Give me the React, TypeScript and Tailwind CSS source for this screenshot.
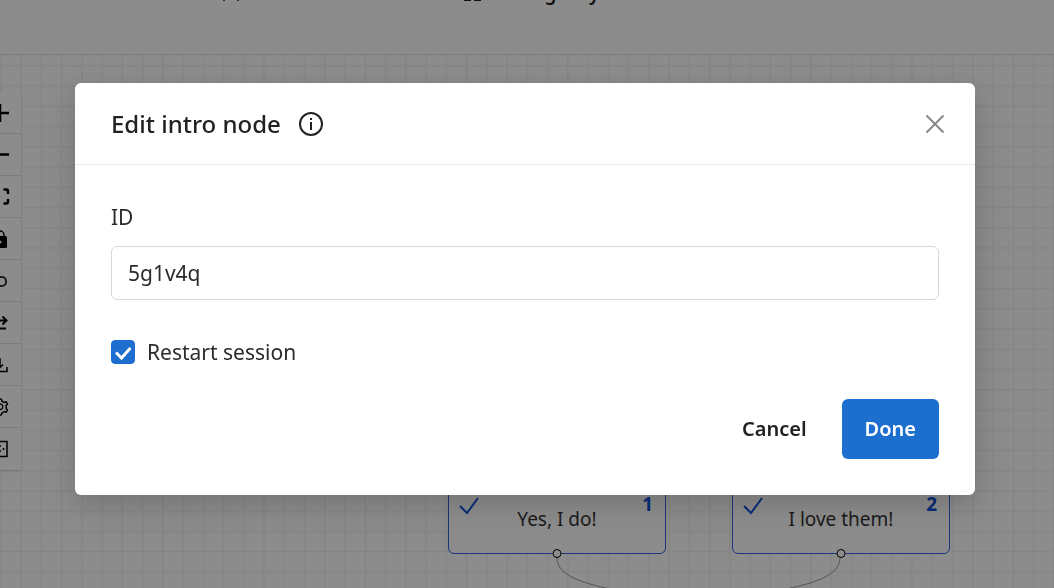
import { useState } from "react";
import { AiOutlineSetting } from "react-icons/ai";

const TOOLS = [
  { label: "Zoom in", icon: <path d="M12 3v18M3 12h18" strokeWidth="2.5" /> },
  { label: "Zoom out", icon: <path d="M3 11.500h18" strokeWidth="2.5" /> },
  {
    label: "Fit view",
    icon: <path d="M15.500 4.500H18q2 0 2 2V9M20 14v2.500q0 2-2 2h-2.500M8.500 4.500H6q-2 0-2 2V9M4 14v2.500q0 2 2 2h2.500" strokeWidth="2.5" />,
  },
  {
    label: "Lock",
    icon: (
      <>
        <rect x="5" y="9" width="14" height="12" rx="1.500" fill="currentColor" stroke="none" />
        <path d="M8 9.500V8a4 4 0 0 1 8 0v1.500" strokeWidth="1.500" />
        <circle cx="12" cy="15" r="1.500" fill="white" stroke="none" />
      </>
    ),
  },
  { label: "Undo", icon: <path d="M4 8h10a4 4 0 0 1 4 4v1a4 4 0 0 1-4 4H6" strokeWidth="2" className="text-[#333]" /> },
  { label: "Swap", icon: <path d="M4 9.500h14M14.500 5.500l4 4-4 4M4 17.500h14" strokeWidth="2" /> },
  { label: "Download", icon: <path d="M12 5v9M9 11.500l3 3 3-3M5 14v4.500h14V14" strokeWidth="1.500" /> },
  { label: "Settings", icon: <AiOutlineSetting x="2" y="2" size={20} stroke="currentColor" /> },
  { label: "Log", icon: <path d="M5 4.500h14v15H5zM12 8v2M12 13v2M15.500 11v2" strokeWidth="1.500" /> },
];

const ANSWERS = [
  { number: 1, text: "Yes, I do!" },
  { number: 2, text: "I love them!" },
];

function Grid() {
  return (
    <svg className="absolute inset-0 h-full w-full" aria-hidden="true">
      <defs>
        <pattern id="grid" y="10" width="20.25" height="20.25" patternUnits="userSpaceOnUse">
          <path d="M0.500 0V20.25M0 0.500H20.25" stroke="#f3f3f3" strokeWidth="2" />
        </pattern>
      </defs>
      <rect width="100%" height="100%" fill="url(#grid)" />
    </svg>
  );
}

function AnswerNode({ number, text }: { number: number; text: string }) {
  return (
    <div className="relative h-32 w-[218px] rounded-md border border-[#2f62e0] bg-white text-[19px] text-[#333]">
      <svg className="absolute bottom-9 left-2.5 size-6" viewBox="0 0 24 24" fill="none" stroke="#0b4fd8" strokeWidth="2" aria-hidden="true">
        <path d="m1 13 7 7L19 5" />
      </svg>
      <span className="absolute right-3 bottom-[35px] font-bold text-[#0b4fd8]">{number}</span>
      <p className="absolute inset-x-0 bottom-5 text-center">{text}</p>
      <span className="absolute -bottom-[5px] left-1/2 size-[9px] -translate-x-1/2 rounded-full border border-black bg-white" />
    </div>
  );
}

export default function App() {
  const [id, setId] = useState("5g1v4q");
  const [restart, setRestart] = useState(true);

  return (
    <div className="relative flex h-screen flex-col overflow-hidden bg-white font-['Noto_Sans','Open_Sans',sans-serif] text-[#222]">
      {/* Page header */}
      <header className="relative h-[55px] shrink-0 border-b border-[#e4e4e4]">
        <button aria-label="Users" className="absolute -top-[17px] left-[222px]">
          <svg className="size-[18px]" viewBox="0 0 18 18" fill="none" stroke="#555" strokeWidth="2" aria-hidden="true">
            <path d="M2 18v-5a7 7 0 0 1 14 0v5" />
            <circle cx="9" cy="4" r="3" />
          </svg>
        </button>
        <button className="absolute -top-[21px] left-[464px] flex items-center gap-[15px] text-[19px] leading-7 font-semibold">
          <svg className="size-[18px]" viewBox="0 0 18 18" fill="currentColor" aria-hidden="true">
            <path d="M0 0h7v7H0zM10 0h7v7h-7zM0 10h7v7H0zM10 10h7v7h-7z" />
          </svg>
          Change layout
        </button>
      </header>

      {/* Flow canvas */}
      <main className="relative grow">
        <Grid />
        <div className="absolute top-[37px] -left-[21px] w-[42px] divide-y divide-[#e4e4e4] bg-white shadow">
          {TOOLS.map((tool) => (
            <button key={tool.label} aria-label={tool.label} className="flex h-[42px] w-full items-center justify-center text-black">
              <svg className="size-6" viewBox="0 0 24 24" fill="none" stroke="currentColor" aria-hidden="true">{tool.icon}</svg>
            </button>
          ))}
        </div>
        <svg className="absolute top-[503px] left-[448px] h-20 w-[502px]" fill="none" stroke="#999" aria-hidden="true">
          <path d="M109 0C109 41 250 28 250 69M392 0C392 41 250 28 250 69" />
        </svg>
        <div className="absolute top-[371px] left-[448px] flex gap-[66px]">
          {ANSWERS.map((answer) => (
            <AnswerNode key={answer.number} {...answer} />
          ))}
        </div>
      </main>

      {/* Dialog */}
      <div className="fixed inset-0 z-10 bg-black/45 pt-[83px] pr-[79px] pl-[75px]">
        <section
          role="dialog"
          aria-modal="true"
          aria-labelledby="dialog-title"
          className="rounded-md bg-white shadow-[0_8px_24px_rgba(0,0,0,0.12),0_12px_42px_12px_rgba(0,0,0,0.06)]"
        >
          <header className="flex h-[82px] items-center border-b border-[#ececec] pr-7 pl-9">
            <h1 id="dialog-title" className="text-2xl font-medium">Edit intro node</h1>
            <button aria-label="About this node" className="ml-4">
              <svg className="size-7" viewBox="0 0 28 28" fill="none" stroke="currentColor" strokeWidth="2" aria-hidden="true">
                <circle cx="14" cy="14" r="11" />
                <path d="M14 12v8M14 8v2" />
              </svg>
            </button>
            <button aria-label="Close" className="ml-auto text-[#888]">
              <svg className="size-6" viewBox="0 0 24 24" fill="none" stroke="currentColor" strokeWidth="2" aria-hidden="true">
                <path d="m3.500 3.500 17 17M20.500 3.500l-17 17" />
              </svg>
            </button>
          </header>
          <form className="px-9 pt-9 pb-9 text-[21px] text-[#2b2b2b]" onSubmit={(e) => e.preventDefault()}>
            <label htmlFor="node-id" className="block leading-[33px]">ID</label>
            <input
              id="node-id"
              value={id}
              onChange={(e) => setId(e.target.value)}
              className="mt-3 h-[54px] w-full rounded-md border border-[#d9d9d9] px-4"
            />
            <label className="mt-9 flex h-8 items-center gap-3 leading-[33px]">
              <span className="relative size-6">
                <input
                  type="checkbox"
                  checked={restart}
                  onChange={(e) => setRestart(e.target.checked)}
                  className="peer block size-6 appearance-none rounded border border-[#d9d9d9] checked:border-[#1c6fce] checked:bg-[#1c6fce]"
                />
                <svg className="pointer-events-none absolute inset-0 hidden size-6 peer-checked:block" viewBox="0 0 24 24" fill="none" stroke="white" strokeWidth="3" aria-hidden="true">
                  <path d="m5 12.500 5.500 5.500 9-10" />
                </svg>
              </span>
              Restart session
            </label>
            <div className="mt-[31px] flex h-[60px] justify-end gap-3 text-xl font-semibold">
              <button type="button" className="px-[23px] text-[#222]">Cancel</button>
              <button type="submit" className="rounded-md bg-[#1c6fce] px-[23px] text-white">Done</button>
            </div>
          </form>
        </section>
      </div>
    </div>
  );
}
